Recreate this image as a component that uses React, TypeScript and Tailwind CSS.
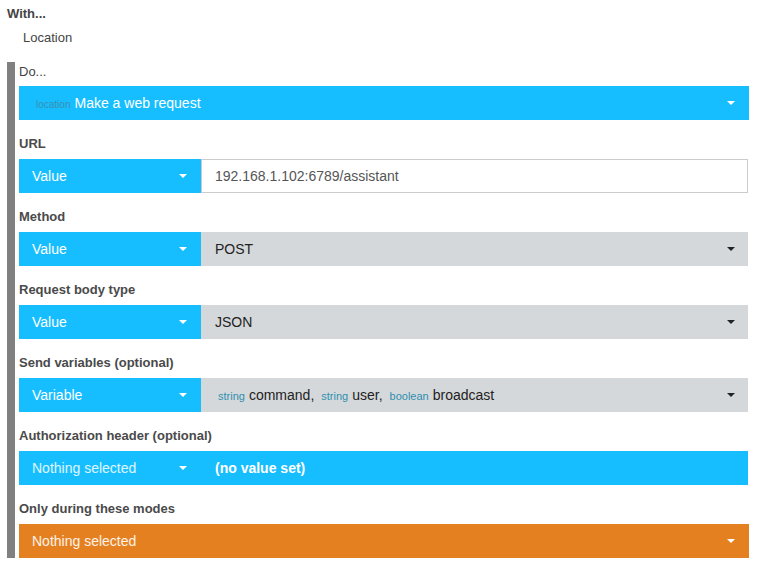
import React from "react";

const Caret = ({ color = "white" }: { color?: "white" | "black" }) => (
  <span
    className={
      "inline-block w-0 h-0 border-l-[4px] border-r-[4px] border-t-[4px] border-l-transparent border-r-transparent " +
      (color === "white" ? "border-t-white" : "border-t-[#222]")
    }
  />
);

const Label = ({ text }: { text: string }) => (
  <div className="h-[16px] leading-[16px] text-[13px] font-bold text-[#4a4a4a] mb-[7px]">
    {text}
  </div>
);

const TypeSelect = ({ text, dim }: { text: string; dim?: boolean }) => (
  <div className="w-[182px] shrink-0 bg-[#17beff] flex items-center justify-between pl-[13px] pr-[14px]">
    <span className={"text-[14px] " + (dim ? "text-white/85" : "text-white")}>{text}</span>
    <Caret />
  </div>
);

const GreySelect = ({ children }: { children: React.ReactNode }) => (
  <div className="flex-1 bg-[#d5d8da] flex items-center justify-between pl-[14px] pr-[13px] mr-[1px]">
    <div className="text-[14px] text-[#222] flex items-baseline">{children}</div>
    <Caret color="black" />
  </div>
);

const Tag = ({ t }: { t: string }) => (
  <span className="text-[11px] text-[#2f8fb0] mr-[4px] ml-[3px]">{t}</span>
);

export default function App() {
  return (
    <div
      className="bg-white w-[757px] h-[577px] pl-[7px] pr-[8px] pt-[6px] text-[#444]"
      style={{ fontFamily: '"Liberation Sans", Arial, sans-serif' }}
    >
      <div className="text-[13px] font-bold leading-[16px] text-[#444]">With...</div>
      <div className="text-[13px] leading-[16px] pl-[16px] mt-[8px] text-[#444]">Location</div>

      <div className="mt-[16px] flex border-l-[8px] border-[#808080] pl-[4px]">
        <div className="flex-1 flex flex-col">
          <div className="pt-[2px] h-[16px] leading-[16px] text-[13px] text-[#444] mb-[6px] box-content">
            Do...
          </div>
          <div className="h-[34px] bg-[#17beff] flex items-center justify-between pl-[17px] pr-[14px]">
            <div className="flex items-baseline">
              <span className="text-[10px] text-[#3a8fb0] mr-[4px]">location</span>
              <span className="text-[14px] text-white">Make a web request</span>
            </div>
            <Caret />
          </div>

          <div className="pt-[16px]">
            <Label text="URL" />
            <div className="h-[34px] flex">
              <TypeSelect text="Value" />
              <div className="flex-1 border border-[#cccccc] flex items-center pl-[13px] text-[14px] text-[#555] mr-[1px]">
                192.168.1.102:6789/assistant
              </div>
            </div>
          </div>

          <div className="pt-[16px]">
            <Label text="Method" />
            <div className="h-[34px] flex">
              <TypeSelect text="Value" />
              <GreySelect>POST</GreySelect>
            </div>
          </div>

          <div className="pt-[16px]">
            <Label text="Request body type" />
            <div className="h-[34px] flex">
              <TypeSelect text="Value" />
              <GreySelect>JSON</GreySelect>
            </div>
          </div>

          <div className="pt-[16px]">
            <Label text="Send variables (optional)" />
            <div className="h-[34px] flex">
              <TypeSelect text="Variable" />
              <GreySelect>
                <Tag t="string" />
                <span>command,</span>
                <span className="w-[4px]" />
                <Tag t="string" />
                <span>user,</span>
                <span className="w-[4px]" />
                <Tag t="boolean" />
                <span>broadcast</span>
              </GreySelect>
            </div>
          </div>

          <div className="pt-[16px]">
            <Label text="Authorization header (optional)" />
            <div className="h-[34px] flex bg-[#17beff] mr-[1px]">
              <TypeSelect text="Nothing selected" dim />
              <div className="flex items-center pl-[14px] text-[14px] font-bold text-white">
                (no value set)
              </div>
            </div>
          </div>

          <div className="pt-[16px]">
            <Label text="Only during these modes" />
            <div className="h-[34px] bg-[#e58020] flex items-center justify-between pl-[13px] pr-[14px]">
              <span className="text-[14px] text-white/90">Nothing selected</span>
              <Caret />
            </div>
          </div>
        </div>
      </div>
    </div>
  );
}
